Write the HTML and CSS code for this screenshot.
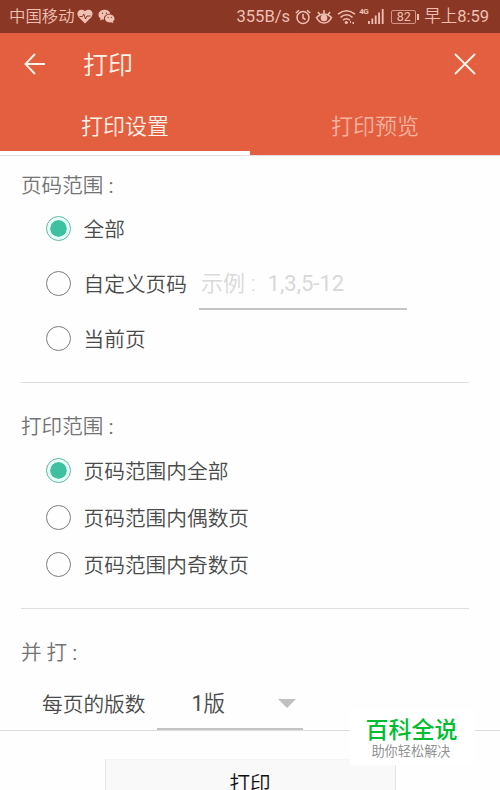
FILE: index.html
```html
<!DOCTYPE html>
<html lang="zh-CN">
<head>
    <meta charset="UTF-8">
    <meta name="viewport" content="width=device-width, initial-scale=1.0">
    <title>打印</title>
    <link rel="stylesheet" href="styles.css">
</head>
<body>
    <div class="screen">
        <div class="status-bar">
            <span class="carrier">中国移动</span>
            <svg class="heart" width="16" height="15" viewBox="0 0 16 15">
                <path class="fill" d="M8 14.500L1.500 8C-1.500 4 2-2 8 2C14-2 17.500 4 14.500 8Z"/>
                <path class="pulse" d="M2.500 7.500H5.500L6.800 5L8.500 10L10 7H13.500"/>
            </svg>
            <svg class="wechat" width="17" height="15" viewBox="0 0 17 15">
                <path class="fill" d="M6.500 .8C3 .8 .5 3 .5 5.800C.5 7.400 1.300 8.700 2.600 9.600L2 11.500L4.300 10.400L6 10.700C5.300 7.300 8.300 4.600 12.400 4.800C11.800 2.400 9.500 .8 6.500 .8Z"/>
                <path class="fill" d="M11.700 5.500C8.900 5.500 6.900 7.200 6.900 9.500S8.900 13.400 11.700 13.400L13.300 13.200L15.300 14.200L14.800 12.600C15.900 11.800 16.500 10.700 16.500 9.500C16.500 7.200 14.500 5.500 11.700 5.500Z"/>
                <g class="eyes"><circle cx="4.500" cy="4.300" r=".7"/><circle cx="8.500" cy="4.300" r=".7"/><circle cx="10.200" cy="8.300" r=".6"/><circle cx="13.300" cy="8.300" r=".6"/></g>
            </svg>
            <span class="speed">355B/s</span>
            <svg class="alarm" width="16" height="16" viewBox="0 0 16 16">
                <circle class="line" cx="8" cy="8.500" r="6"/>
                <path class="line" d="M8 5V9L10.500 10.500M.8 4L4 1.200M15.200 4L12 1.200"/>
            </svg>
            <svg class="eye" width="18" height="16" viewBox="0 0 18 16">
                <path class="line" d="M1.500 8.500Q9 1.500 16.500 8.500Q14 14 9 14T1.500 8.500ZM9 1V5M3 3L5 5.800M15 3L13 5.800"/>
                <circle class="fill" cx="9" cy="9" r="3.300"/>
            </svg>
            <svg class="wifi" width="19" height="16" viewBox="0 0 19 16">
                <path class="line" d="M1 5.200Q9.500-1.800 18 5.200M3.500 8.300Q9.500 3.300 15.500 8.300M6 11.300Q9.500 8.300 13 11.300"/>
                <circle class="fill" cx="9.300" cy="13.500" r="1.600"/>
                <path class="fill" d="M13 12h1v2h-1zM15.500 13h1.500v2h-1.500z"/>
            </svg>
            <span class="network">4G</span>
            <svg class="signal" width="16" height="15" viewBox="0 0 16 15">
                <path class="fill" d="M0 12h1.800v3H0zM3.400 9.500h1.800V15H3.400zM6.800 6.500h1.800V15H6.800zM10.200 3.500H12V15h-1.800zM13.800 0h1.800v15h-1.800z"/>
            </svg>
            <span class="battery">82</span>
            <span class="time">早上<span class="digits">8:59</span></span>
        </div>

        <div class="header">
            <div class="title-bar">
                <svg class="back" width="22" height="22" viewBox="0 0 22 22">
                    <path d="M21 11H1.500M11 1L1.500 11L11 21"/>
                </svg>
                <h1>打印</h1>
                <svg class="close" width="22" height="22" viewBox="0 0 22 22">
                    <path d="M1 1L21 21M21 1L1 21"/>
                </svg>
            </div>
            <div class="tabs">
                <div class="tab active">打印设置</div>
                <div class="tab">打印预览</div>
            </div>
        </div>

        <div class="content">
            <div class="section pages">
                <h2>页码范围<span class="colon">:</span></h2>
                <label class="option"><span class="radio checked"></span><span class="text">全部</span></label>
                <label class="option"><span class="radio"></span><span class="text">自定义页码</span><span class="page-input">示例<span class="sample-colon">:</span><span class="digits">1,3,5-12</span></span></label>
                <label class="option"><span class="radio"></span><span class="text">当前页</span></label>
            </div>
            <div class="section range">
                <h2>打印范围<span class="colon">:</span></h2>
                <label class="option"><span class="radio checked"></span><span class="text">页码范围内全部</span></label>
                <label class="option"><span class="radio"></span><span class="text">页码范围内偶数页</span></label>
                <label class="option"><span class="radio"></span><span class="text">页码范围内奇数页</span></label>
            </div>
            <div class="section layout">
                <h2>并 打<span class="colon">:</span></h2>
                <div class="per-page">
                    <span>每页的版数</span>
                    <div class="select"><span class="value"><span class="digits">1</span>版</span><span class="arrow"></span></div>
                </div>
            </div>
        </div>

        <div class="footer">
            <div class="print-button">打印</div>
        </div>

        <div class="watermark">
            <div class="brand">百科全说</div>
            <div class="slogan">助你轻松解决</div>
        </div>
    </div>
</body>
</html>
```
FILE: styles.css
```css
* {
    box-sizing: border-box;
}

body {
    margin: 0;
    background-color: #fefefe;
    font-family: Roboto, "Noto Sans CJK SC", sans-serif;
    font-weight: 350;
    color: #4a4a4a;
}

h1, h2 {
    margin: 0;
    font-weight: 350;
}

svg {
    flex: none;
}

.digits {
    font-weight: 400;
}

.screen {
    position: relative;
    display: flex;
    flex-direction: column;
    height: 790px;
    overflow: hidden;
}

/* status bar */
.status-bar {
    display: flex;
    align-items: center;
    flex: none;
    height: 33px;
    padding: 0 11px 0 9px;
    background-color: #8b3726;
    color: #efc0b2;
    font-size: 16.4px;
    line-height: 33px;
    white-space: nowrap;
}

.fill {
    fill: #efc0b2;
}

.line {
    fill: none;
    stroke: #efc0b2;
    stroke-width: 1.5;
}

.carrier {
    width: 68px;
}

.pulse {
    fill: none;
    stroke: #8b3726;
    stroke-width: 1;
}

.eyes {
    fill: #8b3726;
}

.wechat {
    margin-left: 5px;
}

.speed {
    margin-left: auto;
    font-size: 16.6px;
    font-weight: 400;
}

.alarm {
    margin-left: 5px;
}

.eye {
    margin-left: 4px;
}

.wifi {
    margin-left: 4px;
}

.network {
    width: 9px;
    margin-left: 3px;
    margin-bottom: 9px;
    font-size: 8px;
    font-weight: 700;
    letter-spacing: -0.5px;
    line-height: 10px;
}

.battery {
    position: relative;
    width: 25px;
    height: 14px;
    margin-left: 7px;
    margin-right: 8px;
    border: 1px solid #d09585;
    border-radius: 2px;
    font-size: 12.5px;
    font-weight: 400;
    line-height: 12px;
    text-align: center;
}

.battery::after {
    content: "";
    position: absolute;
    top: 3px;
    right: -4px;
    width: 2px;
    height: 6px;
    background-color: #efc0b2;
}

.time {
    font-size: 16.5px;
}

/* header */
.header {
    flex: none;
    height: 123px;
    background-color: #e35f40;
    color: #fff2e8;
    border-bottom: 1px solid #e4dfdf;
}

.title-bar {
    display: flex;
    align-items: center;
    height: 62px;
    padding: 0 24px;
}

.title-bar svg {
    fill: none;
    stroke: #fff2e8;
    stroke-width: 1.9;
}

.title-bar h1 {
    flex: 1;
    padding-top: 3px;
    margin-left: 37px;
    font-size: 25px;
    line-height: 59px;
}

.tabs {
    display: flex;
    height: 60px;
}

.tab {
    flex: 1;
    border-bottom: 4px solid transparent;
    color: #f5b29f;
    font-size: 22px;
    line-height: 63px;
    text-align: center;
}

.tab.active {
    border-bottom-color: #fff;
    color: #fff2e8;
}

/* settings */
.content {
    flex: none;
    height: 574px;
    padding: 15px 31px 0 21px;
}

.section {
    font-size: 20.7px;
    border-bottom: 1px solid #dedede;
}

.section h2 {
    color: #737373;
    font-size: 20.6px;
    line-height: 30px;
}

.colon {
    margin-left: 5px;
    font-weight: 400;
}

.option {
    display: flex;
    align-items: center;
    padding-left: 25px;
}

.text {
    padding-bottom: 2px;
}

.radio {
    flex: none;
    width: 25px;
    height: 25px;
    margin-right: 12.5px;
    border: 1px solid #7c7c7c;
    border-radius: 50%;
}

.radio.checked {
    padding: 3px;
    border-color: #61b7a0;
    background: #3fc0a0 content-box;
    box-shadow: inset 0 0 0 3px #e5fff9;
}

.pages {
    height: 212px;
}

.pages .option {
    height: 55px;
}

.page-input {
    width: 208px;
    height: 53px;
    margin-left: 12px;
    padding-left: 2px;
    border-bottom: 2px solid #c4c4c4;
    color: #d9d9d9;
    font-size: 22px;
    line-height: 53px;
}

.sample-colon {
    margin: 0 12px 0 6px;
}

.range {
    height: 226px;
    padding-top: 29px;
}

.range h2 {
    margin-bottom: 5px;
}

.range .option {
    height: 47px;
}

.layout {
    padding-top: 29px;
    border-bottom: none;
}

.per-page {
    display: flex;
    padding-left: 21px;
    margin-top: 11px;
    line-height: 52px;
}

.select {
    display: flex;
    align-items: center;
    justify-content: space-between;
    width: 146px;
    height: 51px;
    margin-left: 12px;
    padding: 0 7px 0 34px;
    border-bottom: 2px solid #c4c4c4;
}

.value {
    font-size: 21.5px;
}

.arrow {
    border: 9px solid transparent;
    border-top-color: #c0c0c0;
    border-bottom: none;
}

/* footer */
.footer {
    flex: none;
    height: 60px;
    padding-top: 28px;
    border-top: 1px solid #dcdcdc;
}

.print-button {
    width: 291px;
    height: 50px;
    margin: 0 auto;
    border: 1px solid #e5e5e5;
    border-top-color: #f6f6f6;
    background-color: #f9f9f9;
    color: #111;
    font-size: 20.6px;
    line-height: 48px;
    text-align: center;
}

.watermark {
    position: absolute;
    left: 350px;
    top: 710px;
    width: 125px;
    height: 55px;
    background-color: #fff;
    text-align: center;
}

.brand {
    padding-top: 2px;
    margin-left: -2px;
    color: #00be32;
    font-size: 23px;
    font-weight: 500;
    line-height: 38px;
}

.slogan {
    margin-left: -3px;
    color: #888;
    font-size: 13.2px;
    line-height: 3px;
}
```
